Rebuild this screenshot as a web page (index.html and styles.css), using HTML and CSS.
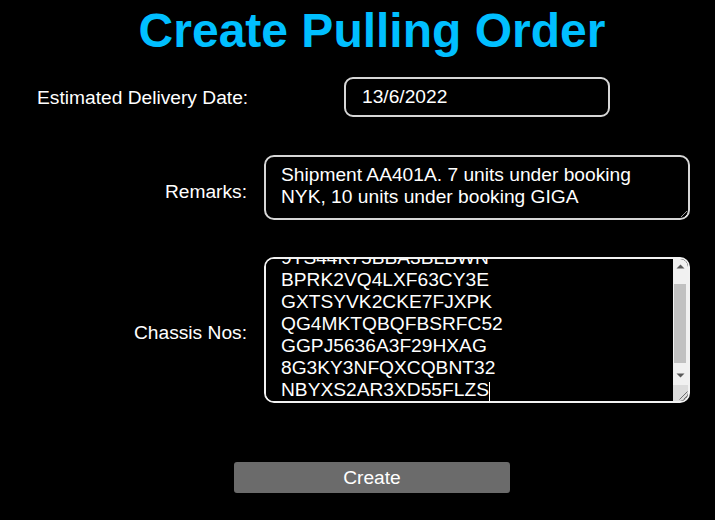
FILE: index.html
```html
<!DOCTYPE html>
<html lang="en">
<head>
<meta charset="utf-8">
<title>Create Pulling Order</title>
<link rel="stylesheet" href="styles.css">
</head>
<body>
<main class="page">
  <h1 class="title">Create Pulling Order</h1>
  <form class="form">
    <label class="label label-date" for="date">Estimated Delivery Date:</label>
    <div class="field field-date">
      <input id="date" class="input" type="text" value="13/6/2022">
    </div>
    <label class="label label-remarks" for="remarks">Remarks:</label>
    <div class="field field-remarks">
      <textarea id="remarks" class="area area-remarks">Shipment AA401A. 7 units under booking NYK, 10 units under booking GIGA</textarea>
    </div>
    <label class="label label-chassis" for="chassis">Chassis Nos:</label>
    <div class="field field-chassis">
      <textarea id="chassis" class="area area-chassis">5YJ3E1EA7KF317260
9TS44K75BBA3BLBWN
BPRK2VQ4LXF63CY3E
GXTSYVK2CKE7FJXPK
QG4MKTQBQFBSRFC52
GGPJ5636A3F29HXAG
8G3KY3NFQXCQBNT32
NBYXS2AR3XD55FLZS</textarea>
      <span class="caret" aria-hidden="true"></span>
      <div class="scrollbar" aria-hidden="true">
        <svg width="15" height="142" viewBox="0 0 15 142">
          <rect x="0" y="0" width="15" height="126" fill="#f1f1f1"/>
          <path d="M3.5 9.5L7.5 5.5L11.5 9.5Z" fill="#5a5a5a"/>
          <rect x="1" y="25" width="12" height="79" fill="#c1c1c1"/>
          <path d="M3.5 114.5L11.5 114.5L7.5 118.5Z" fill="#5a5a5a"/>
          <rect x="0" y="126" width="15" height="16" fill="#dcdcdc"/>
          <path d="M14.5 132.5L6.5 140.5M14.5 136.5L10.5 140.5" stroke="#6e6e6e" stroke-width="1"/>
        </svg>
      </div>
    </div>
  </form>
  <div class="actions">
    <button class="btn" type="button">Create</button>
  </div>
</main>
<script src="script.js"></script>
</body>
</html>
```
FILE: styles.css
```css
html, body {
  margin: 0;
  padding: 0;
  background: #000;
  color: #fff;
  font-family: "Liberation Sans", Arial, sans-serif;
}

.page {
  margin-left: 37px;
  width: 670px;
}

.title {
  margin: 3px 0 0;
  text-align: center;
  font-size: 48px;
  font-weight: bold;
  line-height: normal;
  color: #00bfff;
}

.form {
  display: grid;
  grid-template-columns: 210px 426px;
  column-gap: 17px;
  row-gap: 37px;
  margin-top: 19px;
}

.label {
  font-size: 19.2px;
  text-align: right;
  white-space: nowrap;
  align-self: center;
}

.label-date { margin-top: 2px; }
.label-remarks { margin-top: 10px; }
.label-chassis { margin-top: 6px; }

.field {
  display: flex;
  justify-content: center;
}

.field-remarks { margin-top: 1px; }

.field-chassis {
  position: relative;
}

.input {
  box-sizing: border-box;
  width: 266px;
  height: 40px;
  padding: 0 16px;
  background: #000;
  color: #fff;
  border: 2px solid #d6d6d6;
  border-radius: 9px;
  font-family: inherit;
  font-size: 19.2px;
  outline: none;
}

.area {
  box-sizing: border-box;
  width: 426px;
  background: #000;
  color: #fff;
  border: 2px solid #d6d6d6;
  border-radius: 10px;
  font-family: inherit;
  font-size: 19.2px;
  line-height: normal;
  outline: none;
}

.area-remarks {
  height: 65px;
  padding: 7px 15px;
}

.area-chassis {
  height: 146px;
  padding: 6px 30px 0 15px;
  border-color: #f2f2f2;
  resize: none;
}

.caret {
  position: absolute;
  left: 225px;
  top: 125px;
  width: 1px;
  height: 19px;
  background: #fff;
}

.scrollbar {
  position: absolute;
  top: 2px;
  right: 2px;
  width: 15px;
  height: 142px;
  border-radius: 0 8px 8px 0;
  overflow: hidden;
  line-height: 0;
}

.scrollbar svg {
  display: block;
}

.actions {
  display: flex;
  justify-content: center;
  margin-top: 59px;
}

.btn {
  width: 276px;
  height: 31px;
  border: none;
  border-radius: 3px;
  background: #6b6b6b;
  color: #fff;
  font-family: inherit;
  font-size: 19.2px;
  padding: 0;
}
```
FILE: script.js
```js
var t = document.getElementById('chassis');
t.focus();
t.setSelectionRange(t.value.length, t.value.length);
t.scrollTop = t.scrollHeight;
```
